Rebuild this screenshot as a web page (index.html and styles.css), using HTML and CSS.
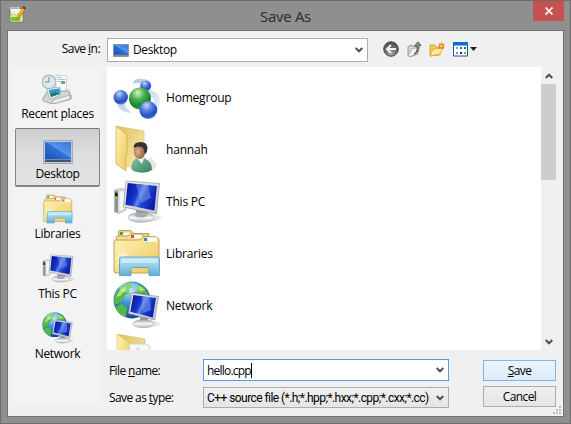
FILE: index.html
```html
<!DOCTYPE html>
<html lang="en">
<head>
<meta charset="utf-8">
<title>Save As</title>
<link rel="stylesheet" href="styles.css">
</head>
<body>
<svg class="defs" width="0" height="0" aria-hidden="true">
  <defs>
    <radialGradient id="blue" cx=".4" cy=".25" r=".75"><stop offset="0" stop-color="#c3d6fa"/><stop offset=".4" stop-color="#5580e0"/><stop offset=".8" stop-color="#234abd"/><stop offset="1" stop-color="#4f83e6"/></radialGradient>
    <radialGradient id="green" cx=".4" cy=".25" r=".75"><stop offset="0" stop-color="#d2f3cc"/><stop offset=".4" stop-color="#4db04e"/><stop offset=".8" stop-color="#168328"/><stop offset="1" stop-color="#43b046"/></radialGradient>
    <linearGradient id="trail" x1="0" y1="0" x2="1" y2="1"><stop offset="0" stop-color="#8fb1dc"/><stop offset="1" stop-color="#e8f0fa"/></linearGradient>
    <linearGradient id="folder" x1="0" y1="0" x2="1" y2="1"><stop offset="0" stop-color="#fff2b5"/><stop offset="1" stop-color="#ecc85e"/></linearGradient>
    <linearGradient id="back" x1="0" y1="0" x2="1" y2="1"><stop offset="0" stop-color="#dfbd59"/><stop offset="1" stop-color="#fbeeb5"/></linearGradient>
    <linearGradient id="screen" x1="0" y1=".2" x2="1" y2=".6"><stop offset="0" stop-color="#0713a0"/><stop offset=".38" stop-color="#1838d0"/><stop offset=".5" stop-color="#668bec"/><stop offset=".62" stop-color="#2448cf"/><stop offset="1" stop-color="#0818ad"/></linearGradient>
    <linearGradient id="bezel" x1="0" y1="0" x2="1" y2="1"><stop offset="0" stop-color="#f5f6f7"/><stop offset="1" stop-color="#b9bec4"/></linearGradient>
    <linearGradient id="metal" x1="0" y1="0" x2="0" y2="1"><stop offset="0" stop-color="#9da1a6"/><stop offset=".5" stop-color="#f8f8f8"/><stop offset="1" stop-color="#b8bbc0"/></linearGradient>
    <linearGradient id="glass" x1="0" y1="0" x2="0" y2="1"><stop offset="0" stop-color="#bde5f4"/><stop offset=".5" stop-color="#91cde9"/><stop offset="1" stop-color="#65add4"/></linearGradient>
    <radialGradient id="ocean" cx=".4" cy=".25" r=".8"><stop offset="0" stop-color="#b9e4fb"/><stop offset=".4" stop-color="#3d94d7"/><stop offset="1" stop-color="#103f8e"/></radialGradient>
    <linearGradient id="desk" x1="0" y1="1" x2="1" y2="0"><stop offset="0" stop-color="#1e50b5"/><stop offset=".5" stop-color="#2e70da"/><stop offset=".55" stop-color="#5295ed"/><stop offset="1" stop-color="#3976d8"/></linearGradient>
    <radialGradient id="skin" cx=".35" cy=".5" r=".7"><stop offset="0" stop-color="#e0b28a"/><stop offset="1" stop-color="#855332"/></radialGradient>
    <linearGradient id="shirt" x1="0" y1="0" x2="1" y2="1"><stop offset="0" stop-color="#84c6a4"/><stop offset="1" stop-color="#32805f"/></linearGradient>
    <radialGradient id="ball" cx=".5" cy=".8" r=".8"><stop offset="0" stop-color="#a5a5a5"/><stop offset=".6" stop-color="#646464"/><stop offset="1" stop-color="#4b4b4b"/></radialGradient>
  </defs>
  <symbol id="pc" viewBox="0 0 48 48">
    <ellipse cx="33" cy="41" rx="15" ry="4" fill="#777" opacity=".2"/>
    <path d="M1.500 13 8 11.500 13 12.500V33L6 36.500 1.500 35z" fill="#d5d7da" stroke="#a2a5a8" stroke-width=".6"/>
    <path d="M1.800 13.300 5 14V36l-3.200-1.200z" fill="#8e9296"/><path d="M2 15.500 4.700 16v4L2 19.500z" fill="#222"/><circle cx="3.500" cy="20.500" r="1.200" fill="#6fe032"/>
    <path d="M6.500 15 11 14v18l-4.500 2z" fill="#f5f5f5"/>
    <path d="M23 33 35 35 34 40H24z" fill="#8f949a"/>
    <ellipse cx="28" cy="40.500" rx="13" ry="4.800" fill="url(#metal)" stroke="#a1a4a8" stroke-width=".6"/>
    <ellipse cx="28" cy="38.500" rx="6" ry="2" fill="#a5a9ad"/>
    <path d="M13 4 46.500 6.500 43.500 37 10.500 30z" fill="url(#bezel)" stroke="#8e959d" stroke-width=".7"/>
    <path d="M14.700 6 44 9 41.300 33.500 12.400 27.800z" fill="url(#screen)"/>
    <path d="M23 7 35 8.200 38 21 28 26z" fill="#83a4f2" opacity=".45"/>
  </symbol>
  <symbol id="libs" viewBox="0 0 48 48">
    <path d="M5.500 12V3q0-1.500 1.500-1.500h11l3 3h15V14z" fill="#e9ce79" stroke="#b99846" stroke-width=".8"/>
    <path d="M7 3.500h10v3H7z" fill="#fff"/><path d="M7 3h3v3H7z" fill="#3bad4c"/>
    <path d="M3 14V9q0-2 2-2h10l2-2h12l3 3h11v10H3z" fill="#f3df94" stroke="#b99846" stroke-width=".8"/>
    <path d="M18 6h10v3.500H18z" fill="#fff"/><path d="M18 6h3v3h-3z" fill="#d9522a"/>
    <path d="M1 13q0-2 2-2h23q2 0 3-2l1-1h13q2 0 3 3v31q0 2-2 2H3q-2 0-2-2z" fill="url(#folder)" stroke="#bc9943" stroke-width=".9"/>
    <path d="M31 8.500h13v4H31z" fill="#fff"/><path d="M31 9h3.200v3H31z" fill="#2a8ccc"/>
    <path d="m10 17 1 9 6-5-5 7 9 2-9 1 5 7-7-5-1 10-1-10-7 5 5-7-5-2 6-1-4-8 6 6z" fill="#fff" opacity=".55"/>
    <path d="M6.500 46.500V30q0-2 2-2H44.500q2 0 2 2v16.500H36V40q0-1.500-1.500-1.500h-15Q18 38.500 18 40v6.500z" fill="url(#glass)" stroke="#4d9fc9" stroke-width=".8"/>
    <path d="M8.500 30h36v4h-36z" fill="#e0f5fb" opacity=".6"/>
  </symbol>
  <symbol id="net" viewBox="0 0 48 48">
    <circle cx="19" cy="19" r="18.500" fill="url(#ocean)"/>
    <path d="M14 2Q7 4 3 12q-3 7-1 12l6-3 4-7 5-2-1-4 4-2-1-4zM2 26l7-3 5 4-1 9q-7-1-11-10zM24 3l7 3 4 7-7-1-3 3-4-4 4-3z" fill="#54b846"/>
    <path d="M7 9 13 5l-1 5-5 5-4 1zM27 5l5 4-5 2z" fill="#a8e06c"/>
    <ellipse cx="17" cy="7" rx="11" ry="5" fill="#fff" opacity=".32"/>
    <ellipse cx="37" cy="43" rx="10" ry="3" fill="#777" opacity=".2"/>
    <path d="M27 36h8v6h-8z" fill="#8e9398"/>
    <ellipse cx="30.500" cy="42.700" rx="10.500" ry="4" fill="url(#metal)" stroke="#9b9fa5" stroke-width=".6"/>
    <path d="M19 12 45.500 15.500 41.700 39 15.500 32.500z" fill="url(#bezel)" stroke="#8e959d" stroke-width=".7"/>
    <path d="M20.300 14 43 17 39.800 36.500 17.300 30.800z" fill="url(#screen)"/>
    <path d="m29 15.200 8 1 1 13-8 2.500z" fill="#83a4f2" opacity=".5"/>
  </symbol>
</svg>

<div class="window">
  <header class="titlebar">
    <svg class="app-icon" width="17" height="17" viewBox="0 0 17 17">
      <path d="M1 2.500h13V16H1z" fill="#fafaf2" stroke="#6c7765"/>
      <path d="M2 7h11.500v8.500H2z" fill="#cde78a"/><path d="M2 11h9v4H2z" fill="#7dc51f"/><path d="M3 5.500h8M3 8h7M3 10h5" stroke="#dfe8cd" stroke-width=".8"/>
      <path d="M2 1v3M4.500 1v3M7 1v3M9.500 1v3" stroke="#eee" stroke-width="1.300"/>
      <path d="m8 13 1-4 4.500-7 2.500 1.500-4.500 7z" fill="#f3ae20" stroke="#a86e18" stroke-width=".6"/><path d="m13.500 1.800 1-1.500L17 1.700 16 3.400z" fill="#96151c"/>
    </svg>
    <h1>Save As</h1>
    <button class="close" aria-label="Close"><svg width="10" height="8" viewBox="0 0 10 8"><path d="m1.500.5 7 7M8.500.5l-7 7" stroke="#fff" stroke-width="1.700"/></svg></button>
  </header>

  <main class="client">
    <aside class="side">
      <div class="lookin-label"><span class="look">Save <u>i</u>n:</span></div>
      <nav class="places">
        <a class="place"><svg width="32" height="32" viewBox="0 0 32 32">
          <path d="m4 19 24-2 2 8-19 7-11-6z" fill="#aaa" opacity=".3"/>
          <circle cx="7" cy="10" r="6.700" fill="#dce9ef" stroke="#b2bdc3" stroke-width="1.500"/><path d="M7 5v5H3" fill="none" stroke="#6e8899"/>
          <path d="m14 3 11 1-1 15H14z" fill="#fbfbfb" stroke="#b5bec4" stroke-width=".7"/><path d="M15.500 5.500h4m-4 2h8m-8 2h3" stroke="#9dafba" stroke-width=".8"/><path d="M19 9h4v3h-4z" fill="#5e9ebd"/>
          <path d="m1 26 5-6 20-1 3 5v3l-18 5L1 29z" fill="#d4d7d8" stroke="#93989a" stroke-width=".8"/>
          <path d="m5 17 13-2 1 8-11 4z" fill="#fff" stroke="#8ea5b1" stroke-width=".7"/><path d="m6.500 18 11-1.800.8 5.500L9 25z" fill="#2f9adc"/><path d="m8 22 5-2 5 2-9 3z" fill="#2f7a4a"/>
          <path d="m11 28 17-5v4l-17 5z" fill="#efefef" stroke="#909496" stroke-width=".6"/>
        </svg><span>Recent places</span></a>
        <a class="place selected"><svg width="32" height="32" viewBox="0 0 32 32">
          <path d="M1.500 8.500h29v23h-29z" fill="#bfc9d4" stroke="#a0aab6"/><path d="M3 10h26v17H3z" fill="url(#desk)"/><path d="M3 27h26v3H3z" fill="#46566b"/><path d="M3 27h26v1H3z" fill="#7a8ca2"/>
        </svg><span>Desktop</span></a>
        <a class="place"><svg class="low" width="32" height="32"><use href="#libs"/></svg><span>Libraries</span></a>
        <a class="place"><svg width="32" height="32"><use href="#pc"/></svg><span>This PC</span></a>
        <a class="place"><svg width="32" height="32"><use href="#net"/></svg><span>Network</span></a>
      </nav>
    </aside>

    <section class="content">
      <div class="toolbar">
        <div class="combo lookin">
          <svg width="16" height="13" viewBox="0 0 16 13"><path d="M.5.500h15v12H.5z" fill="#a9b6c5" stroke="#8996a5"/><path d="M1 1h14v9H1z" fill="url(#desk)"/><path d="M1 10h14v1.500H1z" fill="#56667b"/></svg>
          <span>Desktop</span>
          <svg class="chev" width="8" height="6" viewBox="0 0 8 6"><path d="m.7 1 3.300 3.300L7.300 1" fill="none" stroke="#505050" stroke-width="2"/></svg>
        </div>
        <div class="tools">
          <svg width="16" height="16" viewBox="0 0 16 16"><circle cx="8" cy="8" r="7.300" fill="url(#ball)" stroke="#505050"/><path d="M13 8H4.500M8 4 4 8l4 4" fill="none" stroke="#f3f3f3" stroke-width="2"/></svg>
          <svg width="16" height="16" viewBox="0 0 16 16"><path d="M2 5.500 6 4l1 1.500 5-.5v8l-7 2.500-3-1z" fill="#d5d5d5" stroke="#888" stroke-width=".8"/><path d="m2 14.500 4-7 6-1-3 7-5 2z" fill="#f0f0f0" stroke="#999" stroke-width=".7"/><path d="M8 13q4-2 3-8H8.500L12 .8l3 3.700h-2Q14 11 8 13z" fill="#909090" stroke="#4d4d4d" stroke-width=".8"/></svg>
          <svg width="16" height="16" viewBox="0 0 16 16"><path d="M1 4h5l1 2h5v3l-1 5-10 1z" fill="#efc95c" stroke="#c99b2e" stroke-width=".8"/><path d="m1 15 3-7 10-1-3 6z" fill="#ffeb94" stroke="#d3a53a" stroke-width=".8"/><path d="m12.500 1 .8 2 2-.8-.8 2 1.500.8-1.500.8.800 2-2-.8-.8 1.500-.8-1.500-2 .8.800-2L9 5l1.500-.8-.8-2 2 .8z" fill="#ef6a24"/><circle cx="12.500" cy="5" r="1.500" fill="#ffdc51"/></svg>
          <svg class="views" width="25" height="16" viewBox="0 0 25 16"><path d="M.5 1.500h14V15H.5z" fill="#fff" stroke="#0d5ab8"/><path d="M0 1h15v3.500H0z" fill="#1269d2"/><path d="M3 6h2v2H3z" fill="#9d92bd"/><path d="M7 6h2v2H7z" fill="#1877d4"/><path d="M11 6h2v2h-2z" fill="#168529"/><path d="M3 11h2v2H3z" fill="#f17650"/><path d="M7 11h2v2H7z" fill="#102a92"/><path d="M11 11h2v2h-2z" fill="#bd9519"/><path d="M17 6h7l-3.500 4z" fill="#1e1e26"/></svg>
        </div>
      </div>

      <div class="list">
        <ul class="files">
          <li><svg width="48" height="48" viewBox="0 0 48 48">
            <path d="M4 31q3 9 15 9-7-5-7-10zM20 11q0-6 10-5 5 0 7 3l-7 2q-5-2-10 0zM37 17q9 2 10 10 0 8-4 10-1-13-9-16z" fill="url(#trail)" opacity=".8"/>
            <circle cx="32.700" cy="13" r="5.500" fill="url(#blue)"/><circle cx="7.700" cy="24.300" r="7.200" fill="url(#blue)"/><circle cx="27" cy="25.500" r="11" fill="url(#green)"/><circle cx="35.300" cy="37" r="9" fill="url(#blue)"/>
          </svg><span>Homegroup</span></li>
          <li><svg width="48" height="48" viewBox="0 0 48 48">
            <path d="m30 40 8-8 6 8-4 6z" fill="#888" opacity=".2"/>
            <path d="m3 1 28 5v33l-19 3z" fill="url(#back)" stroke="#d9c37a" stroke-width=".7"/><path d="m3 1 10 8q1 1 1 3v17l-1 1.500V46L3 39z" fill="url(#folder)" stroke="#caa951" stroke-width=".7"/>
            <path d="M18 43q1-9 7-10h6q8 3 8 12-6 4-15 2-5-1-6-4z" fill="url(#shirt)"/><path d="m24 33 5 6 2-6z" fill="#edf4ec"/>
            <ellipse cx="26.500" cy="26.500" rx="5.700" ry="7.500" fill="url(#skin)"/><path d="M20.500 23q0-6 7-6t7 6q0 4-2.500 6.500-.5-5-2-7-4-2-9.500.500z" fill="#34312f"/>
          </svg><span>hannah</span></li>
          <li><svg width="48" height="48"><use href="#pc"/></svg><span>This PC</span></li>
          <li><svg width="48" height="48"><use href="#libs"/></svg><span>Libraries</span></li>
          <li><svg width="48" height="48"><use href="#net"/></svg><span>Network</span></li>
          <li><svg width="48" height="48" viewBox="0 0 48 48"><path d="m4 1 28 5v34L14 42z" fill="url(#back)" stroke="#d9c37a" stroke-width=".7"/><path d="M16 11h17l4 3v25H16z" fill="#f8f8fa" stroke="#c8c8cc" stroke-width=".8"/><path d="m24 13 4 5v21h-9z" fill="#d7dae0"/><path d="m4 1 11 8q1 1 1 3v34L4 39z" fill="url(#folder)" stroke="#dfc983" stroke-width=".7"/></svg></li>
        </ul>
        <div class="scrollbar">
          <svg width="8" height="6" viewBox="0 0 8 6"><path d="m.7 5 3.300-3.300L7.300 5" fill="none" stroke="#505050" stroke-width="2"/></svg>
          <div class="thumb"></div>
          <svg class="down" width="8" height="6" viewBox="0 0 8 6"><path d="m.7 1 3.300 3.300L7.300 1" fill="none" stroke="#505050" stroke-width="2"/></svg>
        </div>
      </div>

      <form class="form">
        <label class="fname">File <u>n</u>ame:</label>
        <div class="combo input"><span class="value">hello.cpp</span><i class="caret"></i><svg class="chev" width="8" height="6" viewBox="0 0 8 6"><path d="m.7 1 3.300 3.300L7.300 1" fill="none" stroke="#505050" stroke-width="2"/></svg></div>
        <button type="button" class="btn primary"><span><u>S</u>ave</span></button>
        <label class="ftype">Save as <u>t</u>ype:</label>
        <div class="combo select"><span class="types">C++ source file (*.h;*.hpp;*.hxx;*.cpp;*.cxx;*.cc)</span><svg class="chev" width="8" height="6" viewBox="0 0 8 6"><path d="m.7 1 3.300 3.300L7.300 1" fill="none" stroke="#505050" stroke-width="2"/></svg></div>
        <button type="button" class="btn"><span>Cancel</span></button>
      </form>
    </section>
    <svg class="grip" width="8" height="8" viewBox="0 0 8 8"><path d="M6 0h2v2H6zM3 3h2v2H3zM6 3h2v2H6zM0 6h2v2H0zM3 6h2v2H3zM6 6h2v2H6z" fill="#bdbdbd"/></svg>
  </main>
</div>
</body>
</html>
```
FILE: styles.css
```css
* { box-sizing: border-box; }
body { margin: 0; font: 12px/16px "Open Sans", "Noto Sans", sans-serif; color: #000; }
svg { display: block; flex: none; }
.defs { position: absolute; }
button { font: inherit; padding: 0; margin: 0; }
u { text-decoration: underline; text-underline-offset: 1px; text-decoration-thickness: 1px; }

.window { width: 571px; height: 424px; background: #8f8f8f; border: 1px solid #6d6d6d; padding: 0 6px 6px; overflow: hidden; }
.titlebar { height: 29px; display: flex; align-items: flex-start; justify-content: space-between; }
.app-icon { margin: 5px 12px 0 2px; }
.titlebar h1 { margin: 4px 0 0; font-size: 15px; line-height: 22px; font-weight: 400; color: #2c2c2c; letter-spacing: -.3px; }
.close { width: 31px; height: 20px; border: 0; background: #c75050; display: grid; place-items: center; }

.client { position: relative; height: 387px; border: 1px solid #737373; background: #f0f0f0; display: flex; padding: 7px 6px 0; }
.side { width: 87px; margin-right: 6px; }
.lookin-label { height: 29px; line-height: 22px; text-align: right; padding-right: 1px; }
.look { letter-spacing: -.55px; }
.places { height: 338px; background: #f3f3f3; padding: 1px 1px 0; }
.place { height: 60px; display: flex; flex-direction: column; align-items: center; padding-top: 4px; letter-spacing: -.3px; }
.place span { margin-top: 2px; }
.place.selected { height: 59px; margin-bottom: 1px; border: 1px solid #858585; border-bottom-width: 2px; border-top-color: #777; border-radius: 2px; background: linear-gradient(#cecece, #dedede 45%, #e3e3e3); padding-top: 3px; }
.low { padding-top: 2px; }

.content { width: 449px; }
.toolbar { display: flex; height: 29px; }
.combo { display: flex; align-items: center; border: 1px solid #acacb2; background: #fff; min-width: 0; }
.chev { margin-left: auto; margin-right: 4px; }
.lookin { width: 261px; height: 24px; padding-left: 5px; gap: 4px; letter-spacing: -.35px; }
.tools { display: flex; gap: 7px; margin: 3px 0 0 15px; }
.tools .views { margin-left: 1px; }

.list { display: flex; height: 283px; background: #fff; overflow: hidden; }
.files { flex: 1; list-style: none; margin: 0; padding: 6px 0 0 6px; }
.files li { height: 52px; display: flex; gap: 5px; }
.files span { margin-top: 17px; letter-spacing: -.2px; }
.scrollbar { width: 15px; background: #f0f0f0; display: flex; flex-direction: column; align-items: center; padding: 6px 0 5px; }
.thumb { width: 15px; height: 96px; margin-top: 5px; background: #cdcdcd; }
.down { margin-top: auto; }

.form { display: grid; grid-template-columns: 96px 246px 73px; grid-template-rows: 22px 21px; row-gap: 6px; margin-top: 9px; }
.form label { padding-left: 2px; line-height: 24px; letter-spacing: -.6px; }
.form .ftype { line-height: 22px; }
.combo.input { border-color: #569de5; padding-left: 3px; }
.combo.select { border-color: #acacac; background: linear-gradient(#f0f0f0, #e5e5e5); padding-left: 3px; }
.value, .types { white-space: nowrap; }
.value { letter-spacing: -.8px; padding-top: 1px; }
.types { font-family: Roboto, "Open Sans", sans-serif; letter-spacing: -.56px; }
.caret { width: 1px; height: 15px; background: #000; }
.btn { width: 73px; height: 21px; margin: 1px 0 0 34px; border: 1px solid #acacac; background: linear-gradient(#f0f0f0, #e5e5e5); color: #000; letter-spacing: -.6px; line-height: 19px; }
.btn + .ftype + .select + .btn { margin-top: -1px; }
.btn.primary { border-color: #7eb4ea; background: linear-gradient(#ebf4fc, #dcecfc); }
.grip { position: absolute; right: 2px; bottom: 2px; }
```
